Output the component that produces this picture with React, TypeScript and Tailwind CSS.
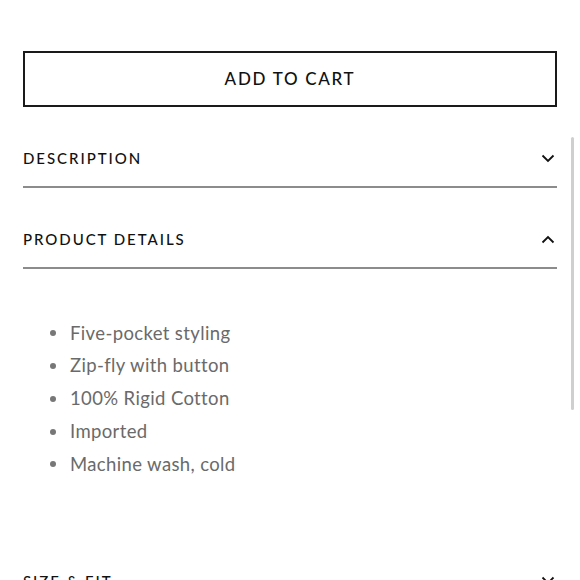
const Chevron = ({ up }: { up?: boolean }) => (
  <svg width="14" height="9" viewBox="0 0 14 9" className="mr-[2px]">
    <path
      d={up ? 'M1.5 7.5 L7 2 L12.5 7.5' : 'M1.5 1.5 L7 7 L12.5 1.5'}
      fill="none"
      stroke="#111"
      strokeWidth="1.8"
    />
  </svg>
);

const Header = ({ title, up }: { title: string; up?: boolean }) => (
  <div className="h-[81px] pt-[23px] flex items-center justify-between border-b-2 border-[#8c8c8c]">
    <span className="text-[15px] tracking-[0.13em] text-[#111] font-medium">{title}</span>
    <Chevron up={up} />
  </div>
);

const items = ['Five-pocket styling', 'Zip-fly with button', '100% Rigid Cotton', 'Imported', 'Machine wash, cold'];

export default function App() {
  return (
    <div className="relative w-[580px] h-[580px] overflow-hidden bg-white" style={{ fontFamily: 'Lato, "Open Sans", sans-serif' }}>
      <div className="px-[23px] pt-[51px]">
        <button className="w-full h-[56px] border-2 border-[#1a1a1a] text-[17px] tracking-[0.1em] text-[#111] font-medium">
          ADD TO CART
        </button>
        <Header title="DESCRIPTION" />
        <Header title="PRODUCT DETAILS" up />
        <ul className="pt-[48px] pb-[48px] pl-[27px]">
          {items.map((t) => (
            <li key={t} className="flex items-center gap-[14px] h-[32.75px] text-[18.5px] tracking-[0.02em] text-[#6a6a6a]">
              <span className="w-[6px] h-[6px] rounded-full bg-[#777]" />
              {t}
            </li>
          ))}
        </ul>
        <div className="h-[81px] pt-[23px] flex items-center justify-between">
          <span className="text-[15px] tracking-[0.13em] text-[#111] font-medium">SIZE &amp; FIT</span>
          <Chevron />
        </div>
      </div>
      <div className="absolute left-[571px] top-[137px] w-[3px] h-[273px] rounded-full bg-[#cfcfcf]" />
    </div>
  );
}
